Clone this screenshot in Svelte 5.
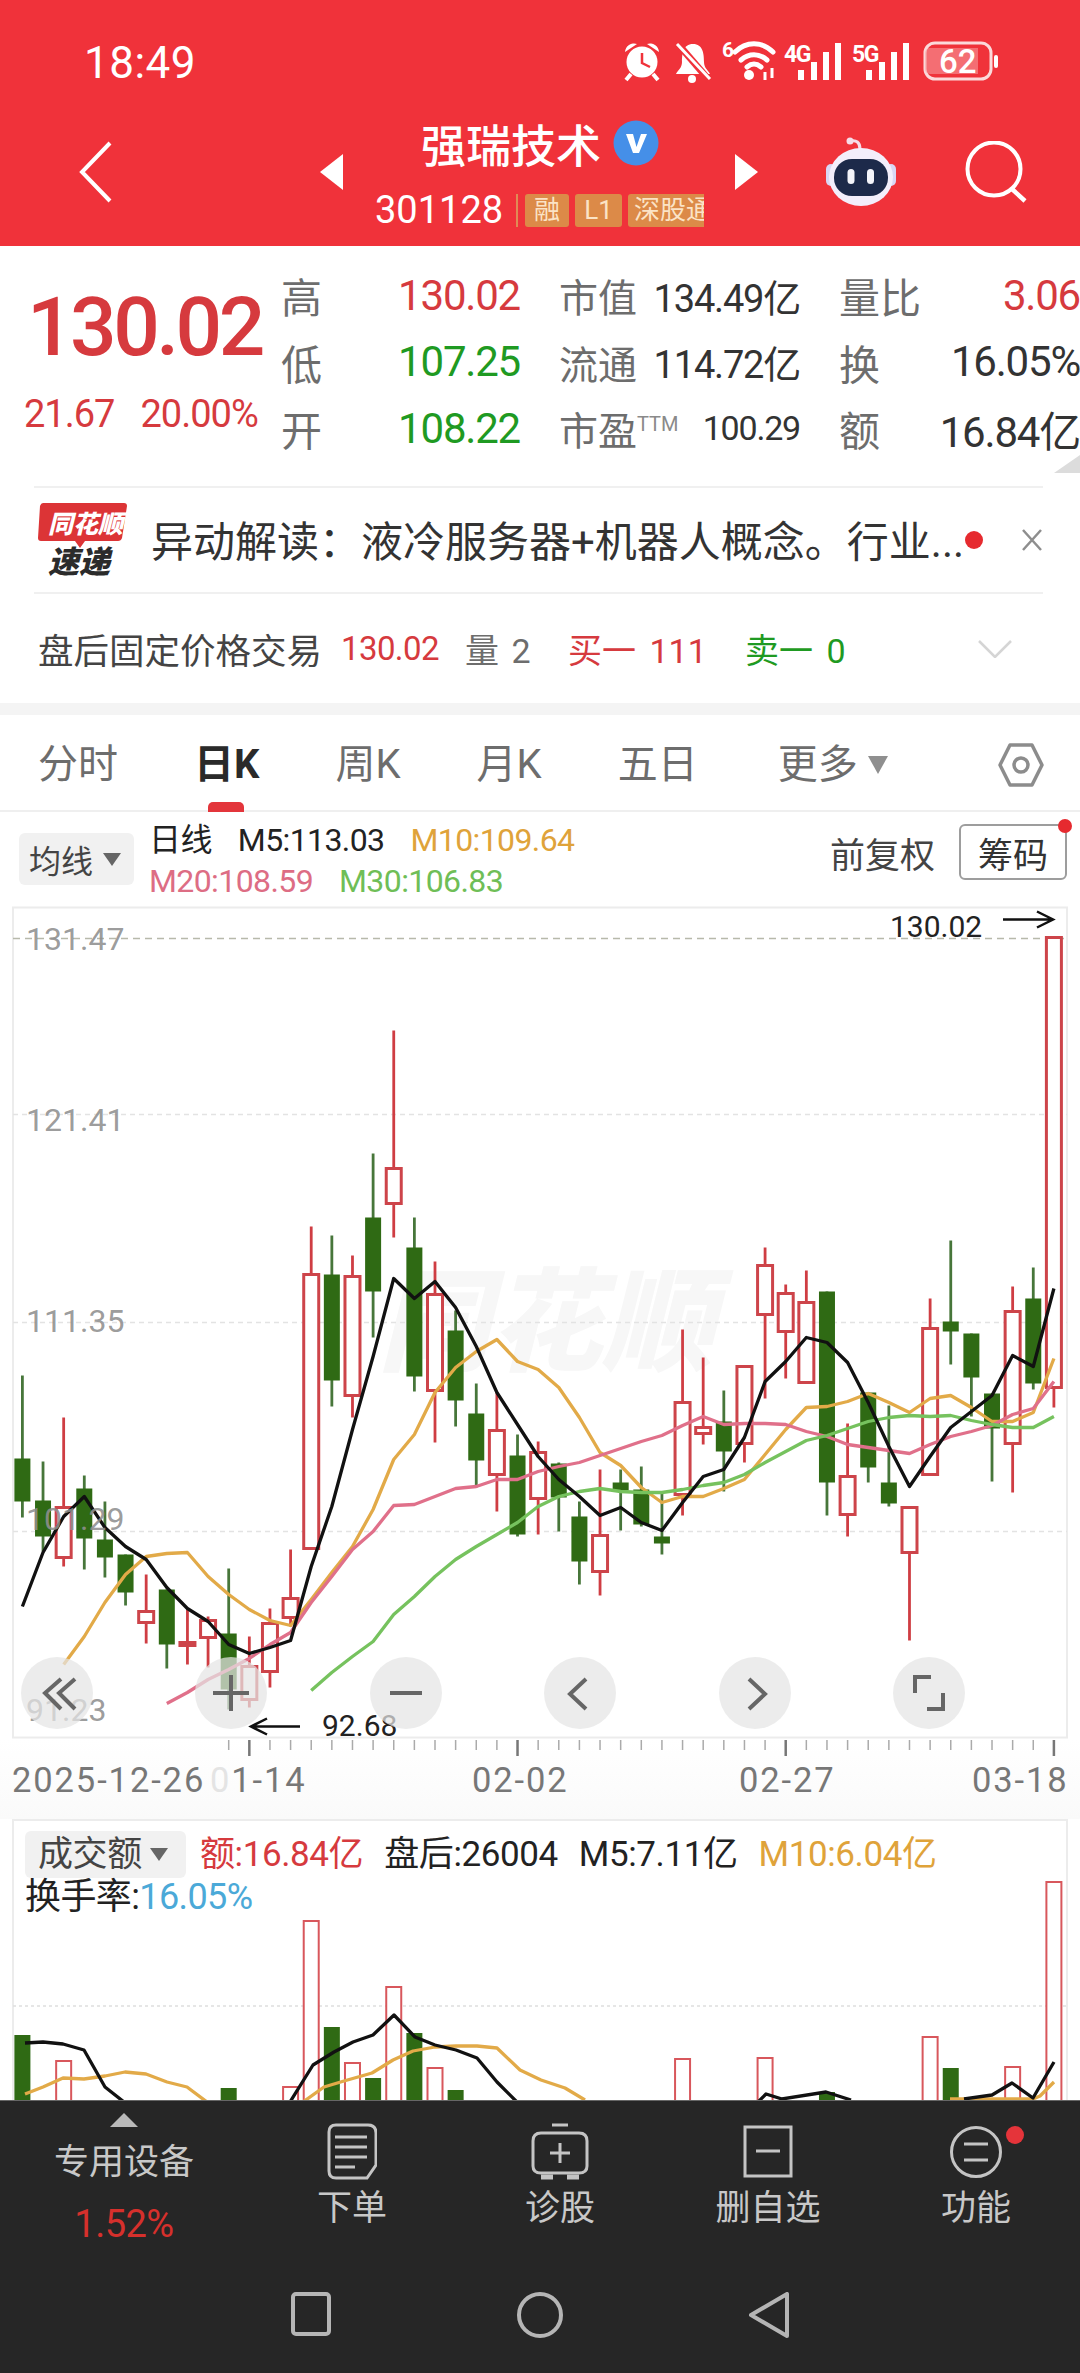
<script>
	const xAt = (i) => 22.4 + 20.63 * i

	// [wick top, body top, body bottom, wick bottom, up?]
	const candles = [
		[1376, 1459, 1502, 1518, 0], [1462, 1501, 1537, 1552, 0], [1418, 1508, 1558, 1567, 1], [1476, 1489, 1539, 1570, 0],
		[1502, 1540, 1558, 1578, 0], [1555, 1555, 1593, 1606, 0], [1575, 1612, 1623, 1644, 1], [1590, 1590, 1645, 1669, 0],
		[1610, 1643, 1646, 1665, 1], [1617, 1621, 1638, 1668, 1], [1569, 1634, 1690, 1710, 0], [1637, 1667, 1700, 1708, 1],
		[1609, 1624, 1672, 1688, 1], [1550, 1599, 1618, 1627, 1], [1227, 1275, 1549, 1549, 1], [1236, 1275, 1381, 1407, 0],
		[1256, 1277, 1396, 1418, 1], [1154, 1218, 1292, 1338, 0], [1031, 1169, 1204, 1238, 1], [1218, 1248, 1377, 1392, 0],
		[1262, 1295, 1391, 1443, 1], [1311, 1331, 1401, 1427, 0], [1384, 1414, 1461, 1488, 0], [1393, 1431, 1475, 1512, 1],
		[1435, 1456, 1535, 1537, 0], [1442, 1453, 1499, 1535, 1], [1463, 1464, 1498, 1532, 0], [1502, 1517, 1562, 1585, 0],
		[1470, 1536, 1572, 1596, 1], [1470, 1483, 1491, 1531, 0], [1467, 1490, 1525, 1527, 0], [1492, 1537, 1544, 1555, 0],
		[1330, 1403, 1495, 1516, 1], [1358, 1428, 1434, 1445, 1], [1391, 1422, 1452, 1492, 0], [1367, 1367, 1444, 1463, 1],
		[1248, 1266, 1315, 1399, 1], [1285, 1294, 1332, 1379, 1], [1271, 1303, 1383, 1383, 1], [1292, 1292, 1483, 1516, 0],
		[1424, 1477, 1515, 1537, 1], [1393, 1393, 1468, 1483, 0], [1406, 1483, 1504, 1507, 0], [1508, 1508, 1553, 1641, 1],
		[1299, 1329, 1475, 1475, 1], [1241, 1322, 1332, 1365, 0], [1334, 1334, 1378, 1417, 0], [1394, 1394, 1429, 1482, 0],
		[1287, 1312, 1444, 1493, 1], [1268, 1299, 1384, 1390, 0], [938, 938, 1388, 1408, 1]
	]

	const m5 = [1607, 1553, 1517, 1497, 1528, 1547, 1560, 1588, 1609, 1622, 1645, 1654, 1648, 1641, 1567, 1507, 1430, 1357, 1279, 1299, 1282, 1308, 1347, 1393, 1425, 1457, 1480, 1497, 1516, 1508, 1523, 1531, 1503, 1477, 1470, 1438, 1382, 1362, 1338, 1343, 1363, 1403, 1447, 1487, 1457, 1428, 1412, 1396, 1356, 1367, 1289]
	const m10 = [1665, 1637, 1603, 1575, 1557, 1554, 1553, 1577, 1595, 1610, 1621, 1626, 1600, 1573, 1547, 1510, 1460, 1435, 1393, 1368, 1352, 1340, 1362, 1370, 1388, 1418, 1453, 1466, 1488, 1503, 1497, 1497, 1489, 1480, 1455, 1430, 1408, 1407, 1402, 1394, 1403, 1413, 1399, 1396, 1408, 1422, 1422, 1413, 1359]
	const m20 = [1704, 1693, 1680, 1670, 1659, 1645, 1633, 1603, 1577, 1550, 1532, 1506, 1505, 1497, 1489, 1487, 1480, 1480, 1472, 1467, 1463, 1456, 1449, 1442, 1436, 1426, 1417, 1425, 1424, 1424, 1425, 1432, 1437, 1445, 1448, 1451, 1454, 1445, 1437, 1432, 1426, 1415, 1409, 1382]
	const m30 = [1691, 1673, 1657, 1642, 1615, 1597, 1577, 1560, 1547, 1535, 1523, 1507, 1497, 1492, 1489, 1492, 1493, 1493, 1490, 1486, 1483, 1475, 1463, 1452, 1441, 1436, 1429, 1422, 1418, 1416, 1417, 1416, 1421, 1425, 1428, 1428, 1417]

	const pts = (arr, start) => arr.map((y, k) => `${xAt(k + start).toFixed(1)},${y}`).join(' ')

	const priceLabels = [
		['131.47', 950], ['121.41', 1131], ['111.35', 1332], ['101.29', 1530], ['91.23', 1721]
	]

	// [candle index, bar top, up?]
	const volumes = [
		[0, 2035, 0], [2, 2061, 1], [10, 2088, 0], [13, 2087, 1], [14, 1921, 1], [15, 2027, 0], [16, 2063, 1],
		[17, 2078, 0], [18, 1987, 1], [19, 2033, 0], [20, 2068, 1], [21, 2090, 0], [32, 2059, 1], [36, 2058, 1],
		[39, 2092, 0], [44, 2037, 1], [45, 2068, 0], [48, 2067, 1], [50, 1882, 1]
	]
	const volBlack = [
		'25,2043 43,2042 63,2044 84,2050 105,2087 124,2102',
		'290,2102 313,2065 334,2052 353,2042 373,2035 394,2015 415,2037 435,2045 456,2050 477,2058 497,2082 517,2102',
		'758,2102 766,2094 782,2099 826,2092 851,2100',
		'964,2099 992,2095 1012,2083 1033,2098 1054,2062'
	]
	const volGold = [
		'25,2094 43,2087 63,2078 84,2079 105,2076 125,2072 146,2074 167,2082 187,2087 207,2102',
		'303,2102 324,2087 344,2081 372,2073 393,2060 413,2051 435,2047 456,2046 477,2046 497,2048 520,2070 541,2080 565,2088 585,2100',
		'950,2099 1033,2099 1040,2096 1054,2082'
	]

	const ticks = Array.from({ length: 41 }, (_, k) => ({ x: xAt(k + 10), long: (k + 10 - 11) % 13 === 0 }))
	const zoomButtons = [
		'M40 22 L24 36 L40 52 M54 22 L38 36 L54 52',
		'M18 36 H54 M36 18 V54',
		'M20 36 H52',
		'M42 22 L26 37 L42 52',
		'M30 22 L46 37 L30 52',
		'M38 20 H22 V36 M34 52 H50 V36'
	]
</script>

<div class="page">
	<header class="top">
		<div class="status">
			<span class="time">18:49</span>
			<svg class="status-icons" width="376" height="50" viewBox="624 36 376 50" fill="#fff">
				<g>
					<circle cx="642" cy="62" r="15.5" fill="#fff" />
					<path d="M642 53 V63 L650 67" fill="none" stroke="#f0323a" stroke-width="2.5" />
					<path d="M625 52 A9 9 0 0 1 637 44 Z M659 52 A9 9 0 0 0 647 44 Z" />
					<path d="M631 74 L626 80 M653 74 L658 80" stroke="#fff" stroke-width="4" />
				</g>
				<g>
					<path d="M693 44 C683 44 682 54 682 62 C682 68 678 70 676 74 H710 C708 70 704 68 704 62 C704 54 703 44 693 44 Z" />
					<circle cx="692" cy="79" r="4" />
					<path d="M678 44 L709 80" stroke="#f0323a" stroke-width="7" />
					<path d="M677 44 L710 79" stroke="#fff" stroke-width="3" />
				</g>
				<g>
					<text x="722" y="57" class="six">6</text>
					<path d="M735 52 C746 41 762 41 773 52 M741 60 C749 53 759 53 767 60 M747 67 C752 63 756 63 761 67" fill="none" stroke="#fff" stroke-width="5" stroke-linecap="round" />
					<circle cx="749" cy="75" r="5" />
					<path d="M765 72 V80 M772 68 V78" stroke="#fff" stroke-width="3" />
				</g>
				<g>
					<text x="784" y="62" class="mini">4G</text>
					<path d="M798 70 h6 v10 h-6z M811 62 h6 v18 h-6z M823 52 h6 v28 h-6z M835 43 h6 v37 h-6z" />
				</g>
				<g>
					<text x="852" y="62" class="mini">5G</text>
					<path d="M866 70 h6 v10 h-6z M879 62 h6 v18 h-6z M891 52 h6 v28 h-6z M903 43 h6 v37 h-6z" />
				</g>
				<g>
					<rect x="925" y="43" width="66" height="36" rx="10" fill="none" stroke="#fbd9da" stroke-width="3" />
					<path d="M930 48 h48 v26 h-48 a5 5 0 0 1 -5 -5 v-16 a5 5 0 0 1 5 -5z" fill="#f8a0a3" fill-opacity=".55" />
					<rect x="994" y="55" width="4" height="13" rx="2" />
					<text x="939" y="73" class="batt">62</text>
				</g>
			</svg>
		</div>
		<nav class="nav">
			<svg class="back" width="33" height="62" viewBox="0 0 33 62"><path d="M31 2 L3 31 L31 60" fill="none" stroke="#fff" stroke-width="4" /></svg>
			<svg class="arrow-l" width="23" height="36" viewBox="0 0 23 36"><path d="M23 0 V36 L0 18Z" fill="#fff" /></svg>
			<div class="stock">
				<div class="name">
					<span>强瑞技术</span>
					<svg width="46" height="46" viewBox="0 0 46 46">
						<circle cx="23" cy="23" r="22.5" fill="#458fe8" />
						<path d="M13 14 H20 L23.500 27 L28 14 H34 L26 33 H20Z" fill="#fff" />
					</svg>
				</div>
				<div class="code">
					<span class="num">301128</span>
					<i class="sep"></i>
					<span class="tag t1">融</span>
					<span class="tag t2">L1</span>
					<span class="tag t3">深股通</span>
				</div>
			</div>
			<svg class="arrow-r" width="23" height="36" viewBox="0 0 23 36"><path d="M0 0 V36 L23 18Z" fill="#fff" /></svg>
			<svg class="robot" width="72" height="70" viewBox="825 137 72 70">
				<path d="M860 149 C860 142 856 140 851 141" fill="none" stroke="#f6dce8" stroke-width="3" />
				<circle cx="850" cy="141" r="3.500" fill="#f6dce8" />
				<rect x="826" y="164" width="10" height="22" rx="5" fill="#d9d6f4" />
				<rect x="886" y="164" width="10" height="22" rx="5" fill="#d9d6f4" />
				<ellipse cx="861" cy="177" rx="32" ry="29" fill="#f3eefb" />
				<rect x="834" y="159" width="54" height="37" rx="18" fill="#1d2a4a" />
				<rect x="847.500" y="169" width="7" height="15" rx="3.500" fill="#f4f4fa" />
				<rect x="867" y="169" width="7" height="15" rx="3.500" fill="#f4f4fa" />
			</svg>
			<svg class="search" width="62" height="62" viewBox="0 0 62 62">
				<circle cx="29" cy="28" r="26.500" fill="none" stroke="#fff" stroke-width="4" />
				<path d="M47 48 L60 60" stroke="#fff" stroke-width="4.500" />
			</svg>
		</nav>
	</header>

	<section class="quote">
		<div class="summary">
			<div class="price">
				<div class="last">130.02</div>
				<div class="change"><span>21.67</span><span>20.00%</span></div>
			</div>
			<div class="stats">
				<div class="cell"><span class="lab">高</span><span class="val red">130.02</span></div>
				<div class="cell"><span class="lab sm">市值</span><span class="val sm dark">134.49亿</span></div>
				<div class="cell"><span class="lab">量比</span><span class="val red">3.06</span></div>
				<div class="cell"><span class="lab">低</span><span class="val green">107.25</span></div>
				<div class="cell"><span class="lab sm">流通</span><span class="val sm dark">114.72亿</span></div>
				<div class="cell"><span class="lab">换</span><span class="val dark">16.05%</span></div>
				<div class="cell"><span class="lab">开</span><span class="val green">108.22</span></div>
				<div class="cell"><span class="lab sm">市盈<sup>TTM</sup></span><span class="val xs dark">100.29</span></div>
				<div class="cell"><span class="lab">额</span><span class="val dark">16.84亿</span></div>
			</div>
			<svg class="corner" width="26" height="18" viewBox="0 0 26 18"><path d="M26 0 V18 H0Z" fill="#dcdcdc" /></svg>
		</div>

		<div class="news">
			<svg class="logo" width="90" height="82" viewBox="0 -3 90 82">
				<path d="M5 1 H86 Q89 1 89 4 L84 36 Q83 39 80 39 H47 L42 46 L37 39 H3 Q0 39 0 36 L2 4 Q3 1 5 1Z" fill="#dc3436" />
				<text x="10" y="31" class="logo-top">同花顺</text>
				<text x="10" y="71" class="logo-bottom">速递</text>
			</svg>
			<span class="headline">异动解读：液冷服务器+机器人概念。行业...</span>
			<i class="dot"></i>
			<svg class="close" width="22" height="24" viewBox="0 0 22 24"><path d="M2 2 L20 22 M20 2 L2 22" stroke="#8e8e8e" stroke-width="2.500" /></svg>
		</div>

		<div class="after">
			<span class="after-title">盘后固定价格交易</span>
			<span class="red tp">130.02</span>
			<span class="muted vol">量 2</span>
			<span class="red bid">买一 111</span>
			<span class="green ask">卖一 0</span>
			<svg class="fold" width="34" height="18" viewBox="0 0 34 18"><path d="M1 1 L17 17 L33 1" fill="none" stroke="#d5d5d5" stroke-width="2.500" /></svg>
		</div>
	</section>

	<div class="band"></div>

	<div class="tabs">
		<span class="tab">分时</span>
		<span class="tab active">日K</span>
		<span class="tab">周K</span>
		<span class="tab">月K</span>
		<span class="tab">五日</span>
		<span class="tab more">更多<i class="caret"></i></span>
		<svg class="hex" width="46" height="46" viewBox="0 0 46 46">
			<path d="M12 3 H34 L44 23 L34 43 H12 L2 23Z" fill="none" stroke="#8c8c8c" stroke-width="3.500" stroke-linejoin="round" />
			<circle cx="23" cy="23" r="7" fill="none" stroke="#8c8c8c" stroke-width="3.500" />
		</svg>
	</div>

	<div class="chart-head">
		<div class="selector">均线<i class="caret small"></i></div>
		<div class="legend">
			<div><span class="ink label">日线</span><span class="ink">M5:113.03</span><span class="gold">M10:109.64</span></div>
			<div><span class="pink">M20:108.59</span><span class="lime">M30:106.83</span></div>
		</div>
		<div class="head-right">
			<span>前复权</span>
			<button>筹码<i></i></button>
		</div>
	</div>

	<div class="kline">
		<svg class="plot" width="1080" height="833" viewBox="0 906.500 1080 833">
			<rect x="13" y="908" width="1054" height="830" fill="#fff" stroke="#ececec" stroke-width="2" />
			<text x="378" y="1362" class="watermark">同花顺</text>
			<line x1="13" x2="1067" y1="939" y2="939" stroke="#b7b9ab" stroke-width="1.500" stroke-dasharray="7 5" />
			{#each [1115, 1323, 1532] as y}
				<line x1="13" x2="1067" y1={y} y2={y} stroke="#e3e3e3" stroke-width="1.500" stroke-dasharray="5 4" />
			{/each}
			{#each candles as [hi, top, bottom, lo, up], i}
				{@const x = xAt(i)}
				<line x1={x} x2={x} y1={hi} y2={lo} class={up ? 'wick-up' : 'wick-down'} />
				{#if up}
					<rect x={x - 7.500} y={top} width="15" height={bottom - top} class="body-up" />
				{:else}
					<rect x={x - 8} y={top} width="16" height={bottom - top} class="body-down" />
				{/if}
			{/each}
			<polyline points={pts(m10, 2)} class="line" stroke="#e2aa48" />
			<polyline points={pts(m20, 7)} class="line" stroke="#e0708a" />
			<polyline points={pts(m30, 14)} class="line" stroke="#76c25e" />
			<polyline points={pts(m5, 0)} class="line" stroke="#111" />
			{#each priceLabels as [label, y]}
				<text x="26" {y} class="axis">{label}</text>
			{/each}
			<text x="890" y="937" class="mark">130.02</text>
			<path d="M1003 920 H1053 M1037 912 L1053 920 L1037 928" class="pointer" />
			<text x="322" y="1736" class="mark">92.68</text>
			<path d="M300 1727 H251 M267 1719 L251 1727 L267 1735" class="pointer" />
		</svg>
		<div class="zoom-bar">
			{#each zoomButtons as d}
				<svg width="72" height="72" viewBox="0 0 72 72">
					<circle cx="36" cy="36" r="36" fill="#e4e4e4" fill-opacity=".72" />
					<path {d} fill="none" stroke="#666" stroke-width="4" />
				</svg>
			{/each}
		</div>
	</div>

	<div class="axis-row">
		<svg class="ticks" width="1080" height="17" viewBox="0 1739 1080 17">
			{#each ticks as t}
				<line x1={t.x} x2={t.x} y1="1740" y2={t.long ? 1756 : 1750} stroke={t.long ? '#777' : '#aaa'} stroke-width={t.long ? 2.500 : 1.500} />
			{/each}
		</svg>
		<div class="dates">
			<span class="d0">2025-12-26</span>
			<span class="d1"><b>0</b>1-14</span>
			<span class="d2">02-02</span>
			<span class="d3">02-27</span>
			<span class="d4">03-18</span>
		</div>
	</div>

	<div class="volume">
		<svg class="plot" width="1080" height="281" viewBox="0 1819 1080 281">
			<rect x="13" y="1820" width="1054" height="300" fill="#fff" stroke="#ececec" stroke-width="2" />
			<line x1="13" x2="1067" y1="2006" y2="2006" stroke="#dedede" stroke-width="1.500" stroke-dasharray="3 3" />
			{#each volumes as [i, top, up]}
				{#if up}
					<rect x={xAt(i) - 7.500} y={top} width="15" height={2130 - top} class="vol-up" />
				{:else}
					<rect x={xAt(i) - 8} y={top} width="16" height={2130 - top} class="body-down" />
				{/if}
			{/each}
			{#each volGold as p}
				<polyline points={p} class="line" stroke="#e2aa48" />
			{/each}
			{#each volBlack as p}
				<polyline points={p} class="line" stroke="#111" />
			{/each}
		</svg>
		<div class="vol-legend">
			<div class="vol-row">
				<div class="selector wide">成交额<i class="caret small"></i></div>
				<span class="red">额:16.84亿</span>
				<span class="ink">盘后:26004</span>
				<span class="ink">M5:7.11亿</span>
				<span class="gold">M10:6.04亿</span>
			</div>
			<div class="turnover"><span class="ink">换手率:</span><span class="sky">16.05%</span></div>
		</div>
	</div>

	<footer class="bottom">
		<div class="actions">
			<div class="action sector">
				<svg width="28" height="14" viewBox="0 0 28 14"><path d="M14 0 L28 14 H0Z" fill="#b9b9b9" /></svg>
				<span class="sector-name">专用设备</span>
				<span class="sector-pct">1.52%</span>
			</div>
			<div class="action">
				<svg width="50" height="57" viewBox="0 0 50 57" fill="none" stroke="#c4c4c4" stroke-width="3">
					<path d="M9 2 H41 Q49 2 49 10 V42 L40 55 H9 Q2 55 2 48 V9 Q2 2 9 2Z" />
					<path d="M8 14 H40 M8 24 H40 M8 34 H40 M8 44 H28" />
				</svg>
				<span>下单</span>
			</div>
			<div class="action">
				<svg width="58" height="57" viewBox="0 0 58 57" fill="none" stroke="#c4c4c4" stroke-width="3">
					<path d="M21 2 H37 M10 10 H48 Q56 10 56 18 V43 Q56 50 48 50 H10 Q2 50 2 43 V18 Q2 10 10 10Z" />
					<path d="M29 20 V40 M19 30 H39" />
					<path d="M10 54 H22 M36 54 H48" stroke-width="5" />
				</svg>
				<span>诊股</span>
			</div>
			<div class="action">
				<svg width="50" height="57" viewBox="0 0 50 57" fill="none" stroke="#c4c4c4" stroke-width="3">
					<rect x="2" y="4" width="46" height="49" />
					<path d="M13 28 H37" />
				</svg>
				<span>删自选</span>
			</div>
			<div class="action">
				<svg width="52" height="57" viewBox="0 0 52 57" fill="none" stroke="#c4c4c4" stroke-width="3">
					<circle cx="26" cy="29" r="24.500" />
					<path d="M14 21 H38 M14 37 H38" />
				</svg>
				<span>功能</span>
				<i class="badge"></i>
			</div>
		</div>
		<div class="sysnav">
			<svg width="40" height="44" viewBox="0 0 40 44"><rect x="2" y="2" width="36" height="40" rx="3" fill="none" stroke="#b5b5b5" stroke-width="4" /></svg>
			<svg width="46" height="46" viewBox="0 0 46 46"><circle cx="23" cy="23" r="21" fill="none" stroke="#b5b5b5" stroke-width="4" /></svg>
			<svg width="40" height="46" viewBox="0 0 40 46"><path d="M38 2 V44 L2 23Z" fill="none" stroke="#b5b5b5" stroke-width="4" stroke-linejoin="round" /></svg>
		</div>
	</footer>
</div>

<style>
	:global(body) {
		margin: 0;
		background: #fff;
	}

	.page {
		width: 1080px;
		height: 2373px;
		overflow: hidden;
		display: flex;
		flex-direction: column;
		background: #fff;
		font-family: Roboto, 'Noto Sans CJK SC', sans-serif;
		color: #333;
	}

	svg {
		display: block;
		flex: none;
	}

	i {
		font-style: normal;
	}

	.red { color: #d63a3e; }
	.green { color: #1f9a22; }
	.dark { color: #333; }
	.ink { color: #222; }
	.gold { color: #dfa33a; }
	.pink { color: #dd6d84; }
	.lime { color: #6fbe57; }
	.sky { color: #4ba9d8; }
	.muted { color: #6d6d6d; }

	/* header */
	.top {
		height: 246px;
		flex: none;
		background: #f0323a;
		color: #fff;
		display: flex;
		flex-direction: column;
	}

	.status {
		height: 108px;
		display: flex;
		align-items: flex-start;
		padding: 36px 0 0 84px;
		box-sizing: border-box;
	}

	.time {
		font-size: 44px;
		line-height: 54px;
		letter-spacing: 0.5px;
		width: 540px;
	}

	.six {
		font: 700 21px Roboto, sans-serif;
		fill: #fff;
	}

	.mini {
		font: 700 23px Roboto, sans-serif;
		letter-spacing: -1.5px;
		fill: #fff;
	}

	.batt {
		font: 500 33px Roboto, sans-serif;
		fill: #fff;
	}

	.nav {
		height: 128px;
		display: flex;
		align-items: center;
		padding-left: 79px;
	}

	.arrow-l {
		margin-left: 208px;
	}

	.stock {
		width: 392px;
		box-sizing: border-box;
		align-self: flex-start;
		padding-top: 6px;
	}

	.name {
		display: flex;
		align-items: center;
		gap: 12px;
		padding-left: 78px;
		height: 58px;
		font-size: 45px;
		font-weight: 500;
	}

	.code {
		display: flex;
		align-items: center;
		padding: 22px 0 0 32px;
	}

	.num {
		font-size: 38px;
		line-height: 33px;
		width: 141px;
	}

	.sep {
		width: 2px;
		height: 33px;
		background: #e08a55;
		margin-right: 7px;
	}

	.tag {
		height: 33px;
		line-height: 33px;
		border-radius: 3px;
		background: #dc8a48;
		color: #fbe3c6;
		font-size: 26px;
		text-align: center;
		margin-right: 6px;
		overflow: hidden;
		white-space: nowrap;
	}

	.t1 { width: 44px; }
	.t2 { width: 47px; }

	.t3 {
		width: 76px;
		margin: 0;
		text-align: left;
		padding-left: 6px;
		box-sizing: border-box;
		border-radius: 3px 0 0 3px;
	}

	.robot {
		margin-left: 67px;
	}

	.search {
		margin-left: 68px;
	}

	/* quote */
	.quote {
		flex: none;
		height: 457px;
		display: flex;
		flex-direction: column;
	}

	.summary {
		height: 240px;
		flex: none;
		display: flex;
		position: relative;
		box-sizing: border-box;
		padding-top: 16px;
	}

	.price {
		width: 281px;
		flex: none;
		box-sizing: border-box;
		padding-left: 27px;
	}

	.last {
		font-size: 82px;
		line-height: 80px;
		font-weight: 500;
		letter-spacing: -3.5px;
		color: #d63a3e;
		margin-top: 25px;
	}

	.change {
		display: flex;
		gap: 26px;
		margin: 23px 0 0 -3px;
		font-size: 38px;
		line-height: 48px;
		letter-spacing: -1px;
		color: #d63a3e;
	}

	.stats {
		display: grid;
		grid-template-columns: 239px 241px 241px;
		column-gap: 39px;
		grid-auto-rows: 66.500px;
		flex: none;
	}

	.cell {
		display: flex;
		justify-content: space-between;
		align-items: center;
		white-space: nowrap;
	}

	.lab {
		font-size: 41px;
		color: #6d6d6d;
	}

	.lab.sm {
		font-size: 39px;
	}

	sup {
		font-size: 20px;
		vertical-align: 14px;
		line-height: 0;
		color: #8a8a8a;
	}

	.val {
		font-size: 42px;
		letter-spacing: -1.2px;
	}

	.val.sm {
		font-size: 38px;
	}

	.val.xs {
		font-size: 34px;
	}

	.corner {
		position: absolute;
		right: 0;
		bottom: 13px;
	}

	.news {
		height: 108px;
		flex: none;
		margin: 0 37px 0 34px;
		border-top: 2px solid #f0f0f0;
		border-bottom: 2px solid #f0f0f0;
		box-sizing: border-box;
		display: flex;
		align-items: center;
		padding-left: 4px;
	}

	.logo-top {
		font: italic 800 25px 'Noto Sans CJK SC', sans-serif;
		fill: #fff;
	}

	.logo-bottom {
		font: italic 900 31px 'Noto Sans CJK SC', sans-serif;
		fill: #2b2b2b;
	}

	.headline {
		width: 810px;
		flex: none;
		margin: -3px 0 0 23px;
		font-size: 42px;
		white-space: nowrap;
		color: #333;
	}

	.dot {
		width: 18px;
		height: 18px;
		border-radius: 50%;
		background: #e62a2f;
		margin-left: 4px;
		flex: none;
	}

	.close {
		margin-left: 38px;
	}

	.after {
		height: 109px;
		flex: none;
		display: flex;
		align-items: center;
		padding-left: 38px;
		font-size: 34px;
		white-space: nowrap;
	}

	.after-title {
		width: 303px;
		font-size: 35.500px;
		color: #444;
	}

	.tp {
		width: 124px;
		font-size: 33px;
		letter-spacing: -0.6px;
	}

	.vol {
		width: 103px;
		word-spacing: 4px;
	}

	.bid {
		width: 177px;
		word-spacing: 5px;
	}

	.ask {
		width: 233px;
		word-spacing: 5px;
	}

	.band {
		height: 12px;
		flex: none;
		background: #f4f4f4;
	}

	/* tabs */
	.tabs {
		height: 97px;
		flex: none;
		box-sizing: border-box;
		border-bottom: 2px solid #efefef;
		display: flex;
		align-items: center;
		gap: 76px;
		padding: 4px 0 0 38px;
		font-size: 40px;
		color: #6d6d6d;
	}

	.tab {
		position: relative;
		line-height: 58px;
		white-space: nowrap;
	}

	.active {
		color: #2a2a2a;
		font-weight: 700;
	}

	.active::after {
		content: '';
		position: absolute;
		left: 14px;
		top: 66px;
		width: 36px;
		height: 10px;
		border-radius: 5px 5px 0 0;
		background: #e3353b;
	}

	.more {
		margin-left: 4px;
		display: flex;
		align-items: center;
		gap: 10px;
	}

	.caret {
		width: 0;
		height: 0;
		border-left: 10px solid transparent;
		border-right: 10px solid transparent;
		border-top: 18px solid #8f8f8f;
	}

	.caret.small {
		border-left-width: 9px;
		border-right-width: 9px;
		border-top: 13px solid #666;
	}

	.hex {
		margin-left: 34px;
	}

	/* chart */
	.chart-head {
		height: 94px;
		flex: none;
		display: flex;
		align-items: flex-start;
		padding-left: 19px;
	}

	.selector {
		width: 115px;
		height: 52px;
		margin-top: 21px;
		box-sizing: border-box;
		padding-left: 10px;
		display: flex;
		align-items: center;
		gap: 10px;
		background: #f1f1f1;
		border-radius: 6px;
		font-size: 32px;
		color: #444;
		flex: none;
	}

	.legend {
		margin-left: 15px;
		padding-top: 8px;
		font-size: 32px;
		line-height: 41px;
		letter-spacing: -0.6px;
		white-space: nowrap;
	}

	.legend span {
		margin-right: 26px;
	}

	.head-right {
		margin-left: auto;
		margin-right: 13px;
		margin-top: 12px;
		display: flex;
		align-items: center;
		gap: 24px;
		font-size: 35px;
		color: #444;
	}

	button {
		position: relative;
		width: 108px;
		height: 56px;
		padding: 0;
		border: 2px solid #9d9d9d;
		border-radius: 6px;
		background: #fff;
		font: inherit;
		color: #333;
	}

	button i {
		position: absolute;
		right: -7px;
		top: -7px;
		width: 14px;
		height: 14px;
		border-radius: 50%;
		background: #e62a2f;
	}

	.kline {
		position: relative;
		height: 833px;
		flex: none;
		z-index: 1;
	}

	.kline .plot {
		overflow: visible;
	}

	.watermark {
		font: italic 900 112px 'Noto Sans CJK SC', sans-serif;
		fill: #f7f7f7;
	}

	.wick-up {
		stroke: #cf3d43;
		stroke-width: 2.800;
	}

	.wick-down {
		stroke: #47763a;
		stroke-width: 2.800;
	}

	.body-up {
		fill: #fff;
		stroke: #cd444a;
		stroke-width: 3;
	}

	.body-down {
		fill: #2f6a14;
	}

	.vol-up {
		fill: #fff;
		stroke: #d8575c;
		stroke-width: 2;
	}

	.line {
		fill: none;
		stroke-width: 3.300;
		stroke-linejoin: round;
	}

	.axis {
		font: 32px Roboto, sans-serif;
		fill: #8f8f8f;
		fill-opacity: 0.9;
	}

	.mark {
		font: 30px Roboto, sans-serif;
		fill: #222;
	}

	.pointer {
		fill: none;
		stroke: #111;
		stroke-width: 2.500;
	}

	.zoom-bar {
		position: absolute;
		left: 21px;
		top: 751px;
		display: flex;
		gap: 102.400px;
	}

	.axis-row {
		height: 80px;
		flex: none;
		background: linear-gradient(#fff, #fafafa);
	}

	.dates {
		display: flex;
		padding: 2px 0 0 12px;
		font-size: 34.500px;
		line-height: 44px;
		letter-spacing: 1.900px;
		color: #777;
		white-space: nowrap;
	}

	.d0 { width: 198px; }
	.d1 { width: 262px; }
	.d1 b { font-weight: 400; color: #e4e4e4; }
	.d2 { width: 267px; }
	.d3 { width: 233px; }

	.volume {
		position: relative;
		height: 281px;
		flex: none;
		overflow: hidden;
	}

	.vol-legend {
		position: absolute;
		left: 25px;
		top: 12px;
		font-size: 35px;
		line-height: 40px;
		white-space: nowrap;
	}

	.vol-row {
		display: flex;
		align-items: center;
		gap: 21px;
		letter-spacing: -0.4px;
	}

	.selector.wide {
		width: 161px;
		height: 47px;
		margin: 0 -7px 0 0;
		padding-left: 13px;
		font-size: 35px;
		gap: 8px;
	}

	.turnover {
		margin-top: -1px;
		font-size: 36px;
		letter-spacing: -0.6px;
	}

	/* footer */
	.bottom {
		flex: 1;
		background: #262626;
		border-top: 1px solid #666;
	}

	.actions {
		height: 145px;
		display: grid;
		grid-template-columns: 248px repeat(4, 208px);
	}

	.action {
		position: relative;
		display: flex;
		flex-direction: column;
		align-items: center;
		padding-top: 22px;
		font-size: 35px;
		line-height: 44px;
		color: #c8c8c8;
	}

	.action span {
		margin-top: 7px;
	}

	.sector {
		padding-top: 12px;
	}

	.action .sector-name {
		margin-top: 14px;
	}

	.action .sector-pct {
		margin-top: 17px;
		color: #d6302c;
		font-size: 38px;
		letter-spacing: -0.5px;
	}

	.badge {
		position: absolute;
		left: 134px;
		top: 25px;
		width: 18px;
		height: 18px;
		border-radius: 50%;
		background: #e5343a;
	}

	.sysnav {
		display: flex;
		align-items: flex-start;
		gap: 186px;
		padding: 46px 0 0 291px;
	}
</style>
